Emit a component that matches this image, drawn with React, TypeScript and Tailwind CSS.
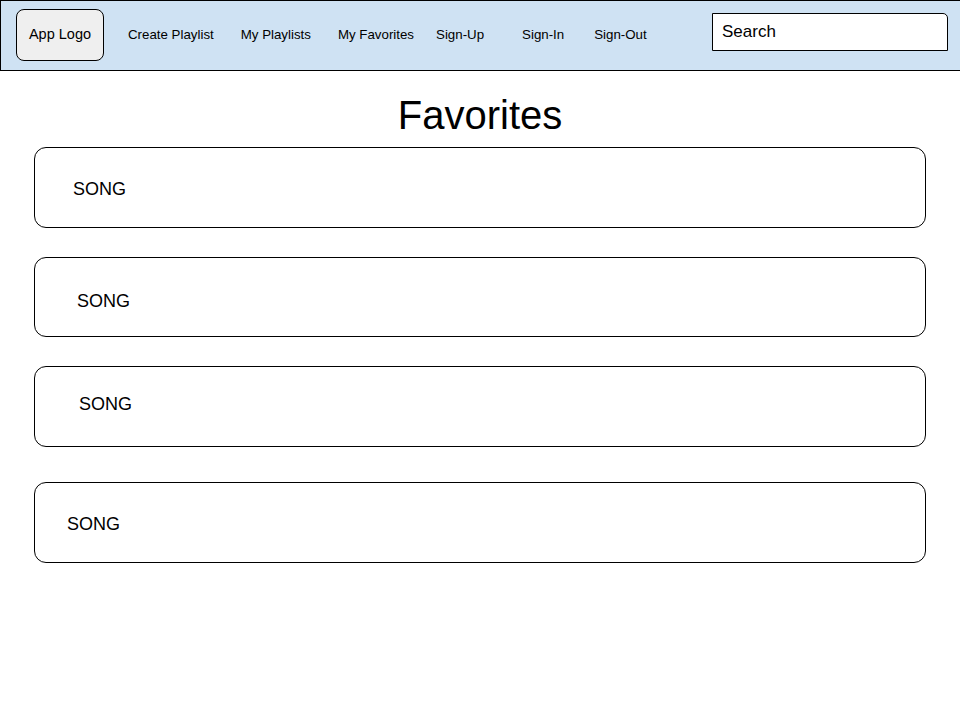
const NAV_LINKS = [
  { label: 'Create Playlist', cls: 'ml-[24px]' },
  { label: 'My Playlists', cls: 'ml-[27px]' },
  { label: 'My Favorites', cls: 'ml-[27px]' },
  { label: 'Sign-Up', cls: 'ml-[22px]' },
  { label: 'Sign-In', cls: 'ml-[38px]' },
  { label: 'Sign-Out', cls: 'ml-[30px]' },
]

// each mock-up card has its label nudged a bit differently
const SONGS = [
  { card: 'h-[81px]', text: 'pl-[38px] pt-[3px]' },
  { card: 'mt-[29px] h-[80px]', text: 'pl-[42px] pt-[9px]' },
  { card: 'mt-[29px] h-[81px]', text: 'pl-[44px] pb-[5px]' },
  { card: 'mt-[35px] h-[81px]', text: 'pl-[32px] pt-[4px]' },
]

export default function App() {
  return (
    <div className="min-h-[720px] bg-white text-black font-['Liberation_Sans',Arial,sans-serif]">
      {/* Top bar */}
      <header className="h-[71px] flex items-center bg-[#cfe2f3] border-t border-l border-b border-black pl-[15px]">
        <div className="w-[88px] h-[52px] flex items-center justify-center rounded-lg border border-black bg-[#efefef] text-[14.5px] mt-[-1px]">
          App Logo
        </div>
        {NAV_LINKS.map(({ label, cls }) => (
          <span key={label} className={`${cls} text-[13.3px] mt-[-2px]`}>{label}</span>
        ))}
        <div className="ml-auto mr-[12px] mt-[-7px] w-[236px] h-[38px] flex items-center bg-white border border-black rounded-tr-[5px] pl-[9px] text-[17px]">
          Search
        </div>
      </header>

      <main className="px-[34px]">
        <h1 className="text-center text-[40px] leading-none pt-[24px] pb-[12px]">Favorites</h1>
        <div className="flex flex-col">
          {SONGS.map((s, i) => (
            <div key={i} className={`${s.card} flex items-center border border-black rounded-[12px] w-[892px]`}>
              <span className={`${s.text} text-[18px]`}>SONG</span>
            </div>
          ))}
        </div>
      </main>
    </div>
  )
}
